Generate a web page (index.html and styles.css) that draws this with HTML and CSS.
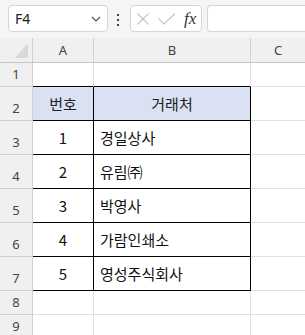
FILE: index.html
```html
<!DOCTYPE html>
<html lang="ko">
<head>
    <meta charset="UTF-8">
    <title>거래처 목록</title>
    <link rel="stylesheet" href="styles.css">
</head>
<body>

<div class="bar">
    <div class="namebox">
        <span>F4</span>
        <svg class="chev" width="10" height="6" viewBox="0 0 10 6"><path d="M1 1 L5 5 L9 1" fill="none" stroke="#555" stroke-width="1.2"/></svg>
    </div>
    <div class="dots"><i></i><i></i><i></i></div>
    <div class="fxbox">
        <svg width="12" height="12" viewBox="0 0 12 12"><path d="M0.5 0.5 L11.5 11.5 M11.5 0.5 L0.5 11.5" stroke="#c4c4c4" stroke-width="1.1"/></svg>
        <svg class="check" width="18" height="12" viewBox="0 0 18 12"><path d="M0.5 5.5 L6 11 L17 0.5" fill="none" stroke="#c4c4c4" stroke-width="1.1"/></svg>
        <span class="fx">fx</span>
    </div>
    <div class="formula"></div>
</div>

<table class="sheet">
    <colgroup>
        <col class="c-head">
        <col class="c-a">
        <col class="c-b">
        <col class="c-c">
    </colgroup>
    <tr class="colhead">
        <th class="corner"><svg width="33" height="24" viewBox="0 0 33 24"><polygon points="15,20 28,20 28,5" fill="#d9d9d9"/></svg></th>
        <th>A</th>
        <th>B</th>
        <th>C</th>
    </tr>
    <tr class="short">
        <th>1</th><td class="bb"></td><td class="bb"></td><td></td>
    </tr>
    <tr class="tall">
        <th>2</th><td class="box title">번호</td><td class="box title">거래처</td><td></td>
    </tr>
    <tr class="tall">
        <th>3</th><td class="box num">1</td><td class="box name">경일상사</td><td></td>
    </tr>
    <tr class="tall">
        <th>4</th><td class="box num">2</td><td class="box name">유림㈜</td><td></td>
    </tr>
    <tr class="tall">
        <th>5</th><td class="box num">3</td><td class="box name">박영사</td><td></td>
    </tr>
    <tr class="tall">
        <th>6</th><td class="box num">4</td><td class="box name">가람인쇄소</td><td></td>
    </tr>
    <tr class="tall">
        <th>7</th><td class="box num">5</td><td class="box name">영성주식회사</td><td></td>
    </tr>
    <tr class="short">
        <th>8</th><td></td><td></td><td></td>
    </tr>
    <tr class="short">
        <th>9</th><td></td><td></td><td></td>
    </tr>
</table>

</body>
</html>
```

FILE: styles.css
```css
body {
    margin: 0;
    background: #fff;
    font-family: 'Noto Sans', 'Noto Sans CJK KR', sans-serif;
    color: #222;
    overflow: hidden;
    width: 305px;
    height: 335px;
}
.bar {
    display: flex;
    align-items: flex-start;
    height: 38px;
    box-sizing: border-box;
    padding: 5px 0 0 8px;
    background: #f5f5f5;
}
.namebox, .fxbox, .formula {
    height: 27px;
    box-sizing: border-box;
    background: #fff;
    border: 1px solid #d6d6d6;
    border-radius: 4px;
}
.namebox {
    width: 100px;
    display: flex;
    align-items: center;
    justify-content: space-between;
    padding: 0 6px 0 6px;
    font-size: 14px;
    color: #222;
}
.chev {
    margin-top: 1px;
}
.dots {
    display: flex;
    flex-direction: column;
    gap: 3px;
    margin: 9px 0 0 9px;
}
.dots i {
    display: block;
    width: 2px;
    height: 2px;
    background: #444;
}
.fxbox {
    width: 72px;
    margin-left: 11px;
    display: flex;
    align-items: center;
    padding-left: 6px;
}
.check {
    margin-left: 9px;
}
.fx {
    margin-left: 8px;
    font-family: 'Liberation Serif', serif;
    font-style: italic;
    font-size: 17px;
    color: #333;
    line-height: 1;
}
.formula {
    flex: 1;
    margin-left: 5px;
    border-right: none;
    border-radius: 4px 0 0 4px;
}
.sheet {
    border-collapse: separate;
    border-spacing: 0;
    table-layout: fixed;
    width: 305px;
}
.c-head { width: 33px; }
.c-a { width: 61px; }
.c-b { width: 157px; }
.c-c { width: 54px; }
th, td {
    box-sizing: border-box;
    padding: 0;
    border-right: 1px solid #e1e1e1;
    border-bottom: 1px solid #e1e1e1;
}
tr > :last-child {
    border-right: none;
}
th {
    background: #f0f0f0;
    font-weight: normal;
    font-size: 13px;
    color: #444;
    border-color: #d0d0d0;
}
.colhead th {
    height: 24px;
    border-bottom-color: #c4c4c4;
    vertical-align: middle;
}
.corner svg {
    display: block;
}
tr th:first-child {
    vertical-align: bottom;
    padding-bottom: 3px;
}
.colhead th:first-child {
    padding: 0;
}
.short td, .short th {
    height: 24px;
}
.tall td, .tall th {
    height: 34px;
}
td {
    font-family: 'Noto Sans CJK KR', sans-serif;
    font-size: 15px;
    color: #111;
    vertical-align: middle;
}
.bb {
    border-bottom-color: #000;
}
.box {
    border-right-color: #000;
    border-bottom-color: #000;
}
.title {
    background: #d9e1f2;
    text-align: center;
    color: #222;
}
.num {
    text-align: center;
}
.name {
    padding-left: 6px;
}
```
